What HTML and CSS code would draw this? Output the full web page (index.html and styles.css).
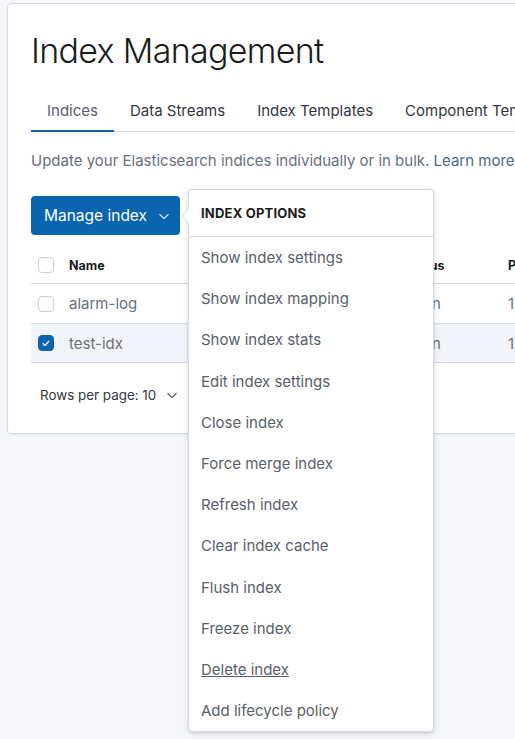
FILE: index.html
```html
<!DOCTYPE html>
<html>
<head>
<meta charset="utf-8">
<link rel="stylesheet" href="styles.css">
</head>
<body>
<div class="card">
  <h1 class="title">Index Management</h1>
  <div class="tabs">
    <div class="tab tab-active">Indices</div>
    <div class="tab">Data Streams</div>
    <div class="tab">Index Templates</div>
    <div class="tab">Component Templates</div>
  </div>
  <p class="desc">Update your Elasticsearch indices individually or in bulk. <span class="link">Learn more</span></p>
  <div class="toolbar">
    <button class="btn"><span>Manage index</span>
      <svg class="chev" width="12" height="12" viewBox="0 0 16 16"><path d="M2 5.5 L8 11.5 L14 5.5" fill="none" stroke="currentColor" stroke-width="1.4"/></svg>
    </button>
    <div class="popover">
      <div class="pop-head">INDEX OPTIONS</div>
      <div class="pop-item">Show index settings</div>
      <div class="pop-item">Show index mapping</div>
      <div class="pop-item">Show index stats</div>
      <div class="pop-item">Edit index settings</div>
      <div class="pop-item">Close index</div>
      <div class="pop-item">Force merge index</div>
      <div class="pop-item">Refresh index</div>
      <div class="pop-item">Clear index cache</div>
      <div class="pop-item">Flush index</div>
      <div class="pop-item">Freeze index</div>
      <div class="pop-item pop-under">Delete index</div>
      <div class="pop-item">Add lifecycle policy</div>
    </div>
  </div>
  <div class="table">
    <div class="row row-head">
      <div class="cell cb-cell"><span class="cb"></span></div>
      <div class="cell">Name</div>
      <div class="cell"></div>
      <div class="cell">Status</div>
      <div class="cell">Primaries</div>
    </div>
    <div class="row">
      <div class="cell cb-cell"><span class="cb"></span></div>
      <div class="cell">alarm-log</div>
      <div class="cell"></div>
      <div class="cell">open</div>
      <div class="cell">1</div>
    </div>
    <div class="row row-sel">
      <div class="cell cb-cell"><span class="cb cb-on"><svg width="10" height="10" viewBox="0 0 16 16"><path d="M3 8.5 L6.5 12 L13 4.5" fill="none" stroke="#fff" stroke-width="2"/></svg></span></div>
      <div class="cell">test-idx</div>
      <div class="cell"></div>
      <div class="cell">open</div>
      <div class="cell">1</div>
    </div>
  </div>
  <div class="pager">Rows per page: 10
    <svg class="chev" width="12" height="12" viewBox="0 0 16 16"><path d="M2 5.5 L8 11.5 L14 5.5" fill="none" stroke="currentColor" stroke-width="1.4"/></svg>
  </div>
</div>
</body>
</html>
```
FILE: styles.css
```css
* { box-sizing: border-box; }
html, body { margin: 0; padding: 0; }
body {
  background: #f5f7fa;
  font-family: Inter, "Noto Sans", sans-serif;
  width: 515px;
  height: 739px;
  overflow: hidden;
}
.card {
  margin: 3px 0 0 7px;
  width: 620px;
  background: #fff;
  border: 1px solid #d3dae6;
  border-radius: 4px;
  padding: 25px 23px 28px 23px;
  box-shadow: 0 1px 3px rgba(0,0,0,0.06);
}
.title {
  margin: 0;
  font-size: 34px;
  font-weight: 300;
  line-height: 43px;
  color: #1a1c21;
  letter-spacing: -0.7px;
}
.tabs {
  display: flex;
  margin-top: 20px;
  border-bottom: 1px solid #d3dae6;
}
.tab {
  padding: 0 16px;
  height: 40px;
  line-height: 38px;
  font-size: 15px;
  color: #343741;
  white-space: nowrap;
  border-bottom: 2px solid transparent;
  margin-bottom: -1px;
}
.tab-active {
  color: #5a606b;
  border-bottom-color: #0b64b0;
}
.desc {
  margin: 19px 0 0;
  font-size: 15px;
  line-height: 20px;
  color: #69707d;
  white-space: nowrap;
}
.link { color: #4e6a8f; }
.toolbar {
  position: relative;
  margin-top: 25px;
  height: 39px;
}
.btn {
  display: flex;
  align-items: center;
  gap: 11px;
  height: 39px;
  width: 149px;
  padding: 0 10px 0 13px;
  border: none;
  border-radius: 4px;
  background: #0b64b0;
  color: #fff;
  font-family: Inter, "Noto Sans", sans-serif;
  font-size: 15.5px;
  white-space: nowrap;
}
.popover {
  position: absolute;
  left: 157px;
  top: -7px;
  width: 246px;
  background: #fff;
  border: 1px solid #d3dae6;
  border-radius: 4px;
  box-shadow: 0 2px 6px rgba(0,0,0,0.12), 0 1px 2px rgba(0,0,0,0.08);
  z-index: 5;
}
.popover::before {
  content: "";
  position: absolute;
  left: -8px;
  top: 18px;
  width: 0; height: 0;
  border-top: 8px solid transparent;
  border-bottom: 8px solid transparent;
  border-right: 8px solid #d3dae6;
}
.popover::after {
  content: "";
  position: absolute;
  left: -7px;
  top: 19px;
  width: 0; height: 0;
  border-top: 7px solid transparent;
  border-bottom: 7px solid transparent;
  border-right: 7px solid #fff;
}
.pop-head {
  height: 47px;
  line-height: 46px;
  padding: 0 12px;
  font-size: 13px;
  font-weight: 700;
  color: #1a1c21;
  border-bottom: 1px solid #d3dae6;
  letter-spacing: 0.2px;
}
.pop-item {
  height: 41.2px;
  line-height: 41px;
  padding: 0 12px;
  font-size: 15px;
  color: #5a5f6b;
  white-space: nowrap;
}
.pop-under { text-decoration: underline; }
.table {
  margin-top: 12px;
}
.row {
  display: grid;
  grid-template-columns: 30px 200px 136px 103px 80px;
  height: 40px;
  align-items: center;
  border-bottom: 1px solid #d3dae6;
  font-size: 15px;
  color: #69707d;
}
.row-head {
  height: 37px;
  font-size: 12.5px;
  font-weight: 700;
  color: #1a1c21;
}
.row-sel { background: #f1f4fa; height: 39px; }
.cell { padding: 0 8px; white-space: nowrap; }
.cb-cell { padding: 0 0 0 7px; display: flex; align-items: center; }
.cb {
  display: inline-flex;
  align-items: center;
  justify-content: center;
  width: 16px;
  height: 16px;
  border: 1px solid #c9d0dc;
  border-radius: 4px;
  background: #fff;
}
.cb-on { background: #0b64b0; border-color: #0b64b0; }
.pager {
  display: flex;
  align-items: center;
  gap: 10px;
  margin-top: 22px;
  padding-left: 9px;
  font-size: 13.4px;
  color: #343741;
  height: 20px;
}
```
